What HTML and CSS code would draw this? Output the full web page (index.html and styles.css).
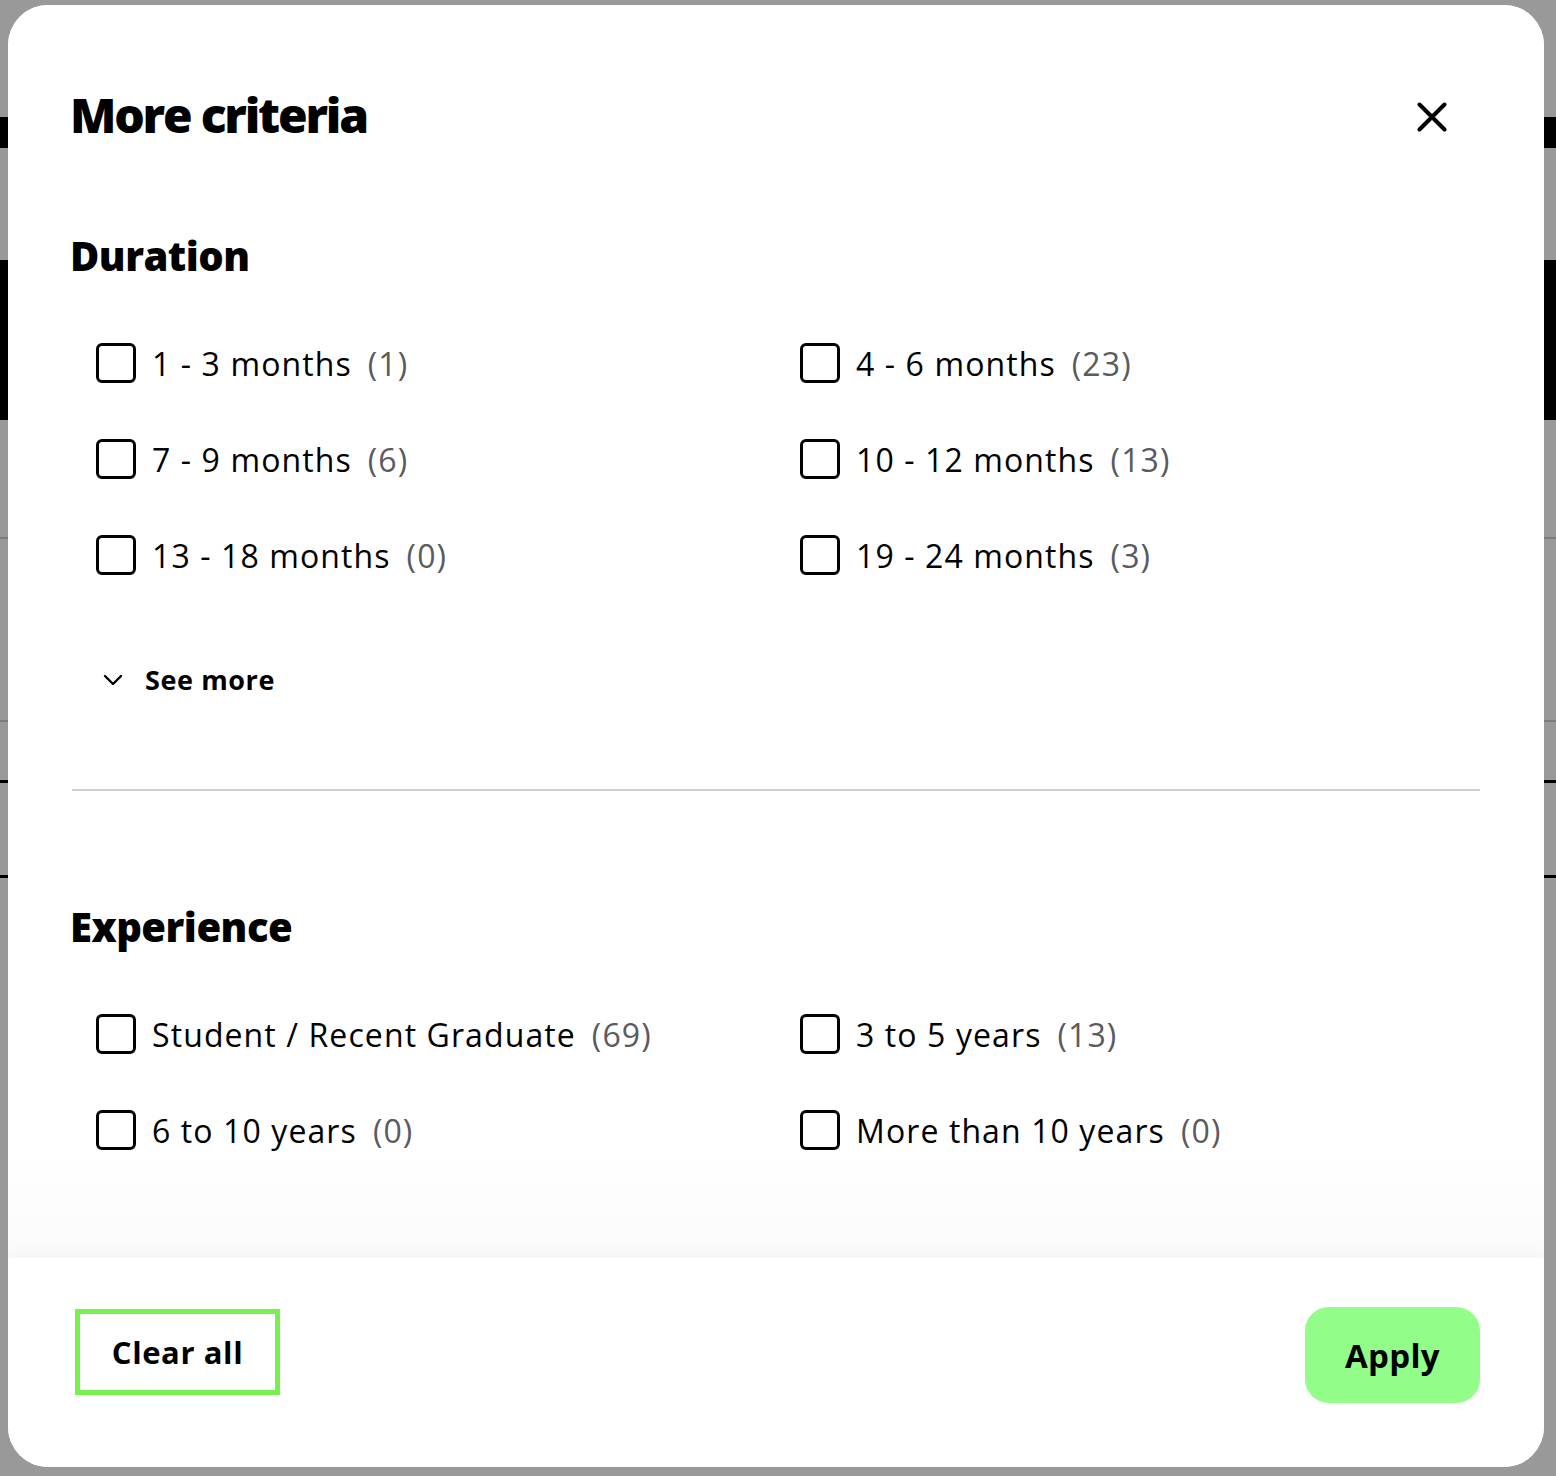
FILE: index.html
```html
<!DOCTYPE html>
<html lang="en">
<head>
<meta charset="utf-8">
<title>More criteria</title>
<link rel="stylesheet" href="styles.css">
</head>
<body>
<div class="modal" role="dialog" aria-labelledby="mc-title">
  <div class="modal-body">
    <header class="modal-header">
      <h1 id="mc-title" class="modal-title">More criteria</h1>
      <button class="close-btn" aria-label="Close">
        <svg width="30" height="30" viewBox="0 0 30 30" aria-hidden="true">
          <path d="M2.5 2.5 L27.5 27.5 M27.5 2.5 L2.5 27.5" stroke="#000" stroke-width="4" stroke-linecap="round" fill="none"/>
        </svg>
      </button>
    </header>

    <section class="group">
      <h2 class="group-title">Duration</h2>
      <div class="options">
        <label class="option"><span class="box"></span><span class="label">1 - 3 months</span><span class="count">(1)</span></label>
        <label class="option"><span class="box"></span><span class="label">4 - 6 months</span><span class="count">(23)</span></label>
        <label class="option"><span class="box"></span><span class="label">7 - 9 months</span><span class="count">(6)</span></label>
        <label class="option"><span class="box"></span><span class="label">10 - 12 months</span><span class="count">(13)</span></label>
        <label class="option"><span class="box"></span><span class="label">13 - 18 months</span><span class="count">(0)</span></label>
        <label class="option"><span class="box"></span><span class="label">19 - 24 months</span><span class="count">(3)</span></label>
      </div>
      <button class="see-more">
        <svg width="20" height="12" viewBox="0 0 20 12" aria-hidden="true">
          <path d="M2 2 L10 10 L18 2" stroke="#000" stroke-width="2.4" stroke-linecap="round" stroke-linejoin="round" fill="none"/>
        </svg>
        <span>See more</span>
      </button>
    </section>

    <hr class="divider">

    <section class="group group-exp">
      <h2 class="group-title">Experience</h2>
      <div class="options">
        <label class="option"><span class="box"></span><span class="label">Student / Recent Graduate</span><span class="count">(69)</span></label>
        <label class="option"><span class="box"></span><span class="label">3 to 5 years</span><span class="count">(13)</span></label>
        <label class="option"><span class="box"></span><span class="label">6 to 10 years</span><span class="count">(0)</span></label>
        <label class="option"><span class="box"></span><span class="label">More than 10 years</span><span class="count">(0)</span></label>
      </div>
    </section>
  </div>

  <footer class="modal-footer">
    <button class="btn-clear">Clear all</button>
    <button class="btn-apply">Apply</button>
  </footer>
</div>
</body>
</html>
```

FILE: styles.css
```css
* { box-sizing: border-box; }

html, body { margin: 0; padding: 0; }

body {
  width: 1556px;
  height: 1476px;
  overflow: hidden;
  font-family: "Open Sans", "Liberation Sans", sans-serif;
  color: #000;
  background:
    linear-gradient(#000, #000) 0 117px / 100% 31px no-repeat,
    linear-gradient(#000, #000) 0 260px / 100% 160px no-repeat,
    linear-gradient(#7d7d7d, #7d7d7d) 0 537px / 100% 2px no-repeat,
    linear-gradient(#7d7d7d, #7d7d7d) 0 720px / 100% 2px no-repeat,
    linear-gradient(#000, #000) 0 780px / 100% 3px no-repeat,
    linear-gradient(#000, #000) 0 875px / 100% 3px no-repeat,
    #999999;
  padding: 5px 12px 9px 8px;
}

.modal {
  width: 1536px;
  height: 1462px;
  background: #fff;
  border-radius: 40px;
  overflow: hidden;
  display: flex;
  flex-direction: column;
}

.modal-body {
  flex: 1;
  padding: 0 64px;
  background: linear-gradient(#fff 92%, #fafafa);
}

.modal-header {
  display: flex;
  justify-content: space-between;
  align-items: center;
  padding-top: 80px;
  padding-right: 33px;
}

.modal-title {
  margin: 0 0 0 -2px;
  font-size: 48px;
  line-height: 60px;
  font-weight: 800;
  letter-spacing: -2.2px;
}

.close-btn {
  border: 0;
  background: none;
  padding: 0;
  width: 30px;
  height: 30px;
  display: flex;
  margin-top: 4px;
  cursor: pointer;
}

.group { padding-top: 86px; }
.group-exp { padding-top: 111px; }

.group-title {
  margin: 0 0 0 -2px;
  font-size: 40px;
  line-height: 50px;
  font-weight: 800;
  letter-spacing: -0.5px;
}

.options {
  display: grid;
  grid-template-columns: 704px 1fr;
  row-gap: 56px;
  padding: 62px 0 0 24px;
}

.option {
  display: flex;
  align-items: center;
  height: 40px;
  font-size: 32px;
  letter-spacing: 1.1px;
  cursor: pointer;
}

.box {
  width: 40px;
  height: 40px;
  border: 3px solid #000;
  border-radius: 6px;
  flex: none;
  margin-right: 16px;
}

.label { color: #000; }

.count {
  color: #5a5a60;
  margin-left: 16px;
}

.see-more {
  display: flex;
  align-items: center;
  gap: 22px;
  border: 0;
  background: none;
  padding: 0 0 0 31px;
  margin-top: 89px;
  font-family: inherit;
  font-size: 27px;
  font-weight: 700;
  letter-spacing: 0.6px;
  line-height: 32px;
  color: #000;
  cursor: pointer;
}

.divider {
  margin: 93px 0 0 0;
  border: 0;
  height: 2px;
  background: #cfcfcf;
}

.modal-footer {
  height: 209px;
  flex: none;
  display: flex;
  justify-content: space-between;
  align-items: flex-start;
  padding: 0 64px 0 67px;
  background: #fff;
  box-shadow: 0 -6px 14px rgba(0, 0, 0, 0.02);
}

.btn-clear {
  width: 205px;
  height: 86px;
  margin-top: 51px;
  border: 5px solid #75f24e;
  background: #fff;
  font-family: inherit;
  font-size: 31px;
  font-weight: 700;
  letter-spacing: 0.6px;
  color: #000;
  cursor: pointer;
}

.btn-apply {
  width: 175px;
  height: 96px;
  margin-top: 49px;
  border: 0;
  border-radius: 24px;
  background: #92fd89;
  font-family: inherit;
  font-size: 33px;
  font-weight: 700;
  letter-spacing: 0.3px;
  color: #000;
  cursor: pointer;
}
```
